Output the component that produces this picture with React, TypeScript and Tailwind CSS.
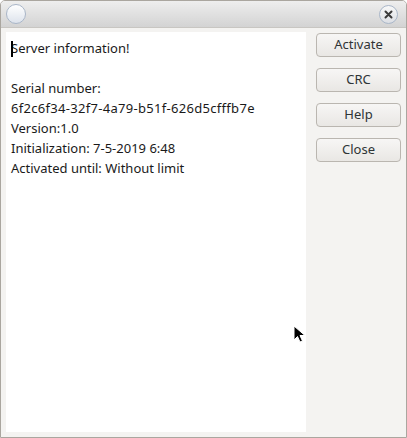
import React from "react";

const lines = [
  "Server information!",
  "",
  "Serial number:",
  "6f2c6f34-32f7-4a79-b51f-626d5cfffb7e",
  "Version:1.0",
  "Initialization: 7-5-2019 6:48",
  "Activated until: Without limit",
];

const buttons = ["Activate", "CRC", "Help", "Close"];

const App = () => {
  return (
    <div
      className="w-[407px] h-[438px] flex flex-col bg-[#f4f3f1] border border-[#aaa69f] rounded-t-[5px] overflow-hidden text-[#2e3436]"
      style={{ fontFamily: '"Noto Sans", "DejaVu Sans", sans-serif' }}
    >
      {/* Title bar */}
      <div className="h-[27px] shrink-0 flex items-center justify-between px-[5px] bg-gradient-to-b from-[#eeeeee] to-[#d3d3d3] border-b border-[#c8c6c2]">
        <div className="w-[20px] h-[20px] rounded-full border border-[#a9b6c8] bg-gradient-to-b from-[#ffffff] to-[#dde3ec]" />
        <div className="w-[19px] h-[19px] mr-[3px] rounded-full border border-[#a9b6c8] bg-gradient-to-b from-[#f8f8f8] to-[#dcdfe4] flex items-center justify-center">
          <svg width="9" height="9" viewBox="0 0 9 9">
            <path d="M1.5 1.5 L7.5 7.5 M7.5 1.5 L1.5 7.5" stroke="#3a3a3a" strokeWidth="2" strokeLinecap="round" />
          </svg>
        </div>
      </div>

      {/* Body */}
      <div className="flex-1 flex pl-[5px] pt-[4px] pb-[5px]">
        <div className="relative w-[300px] bg-white pl-[5px] pt-[6px] text-[13px] leading-[20px] text-[#1a1a1a]">
          <span className="absolute left-[5px] top-[9px] w-[2px] h-[16px] bg-black" />
          {lines.map((line, i) => (
            <div key={i} className={`h-[20px] whitespace-nowrap ${i === 3 ? "tracking-[0.3px]" : ""}`}>
              {line}
            </div>
          ))}
          {/* mouse pointer */}
          <svg className="absolute left-[287px] top-[293px]" width="14" height="20" viewBox="0 0 14 20">
            <path d="M1 1 L1 15 L4.5 11.5 L7 17 L9.5 16 L7 10.5 L12 10.5 Z" fill="#000" stroke="#fff" strokeWidth="1" />
          </svg>
        </div>
        <div className="flex flex-col gap-[11px] pl-[10px] pt-[1px]">
          {buttons.map((b) => (
            <button
              key={b}
              className="w-[85px] h-[24px] rounded-[4px] border border-[#bab6b0] bg-gradient-to-b from-[#f7f6f5] to-[#e9e7e4] text-[13px] text-[#2e3436] flex items-center justify-center"
            >
              {b}
            </button>
          ))}
        </div>
      </div>
    </div>
  );
};

export default App;
